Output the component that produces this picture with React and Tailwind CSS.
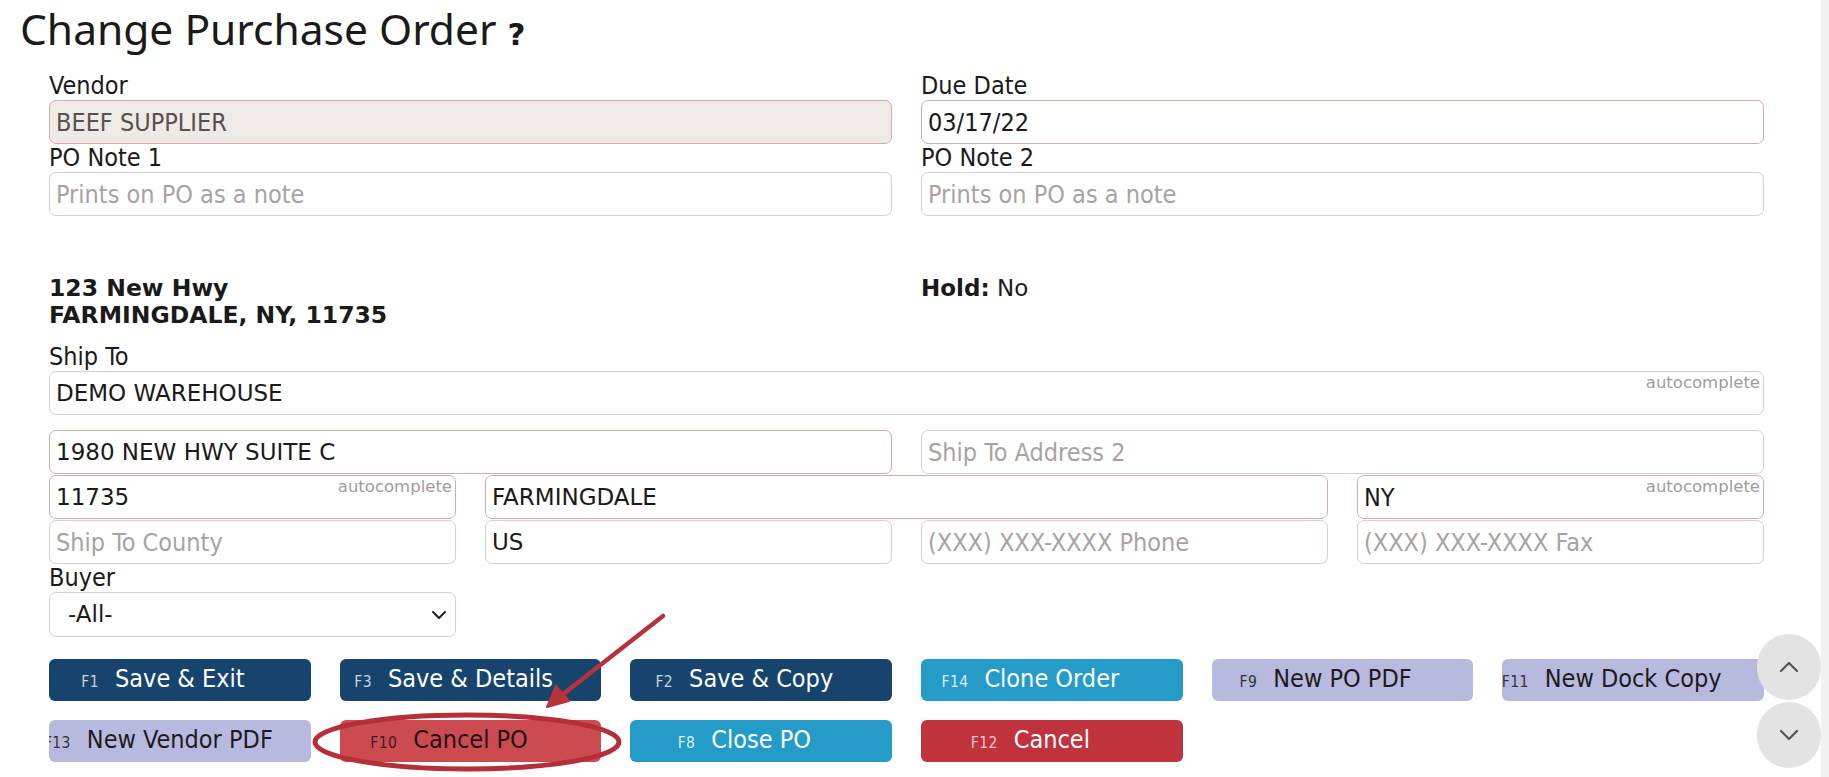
import React from 'react';

const tahoma = "font-['DejaVu_Sans_Condensed','DejaVu_Sans',sans-serif]";
const verdana = "font-['DejaVu_Sans',sans-serif]";

const Label = ({ children }) => (
  <div className={`${tahoma} text-[25px] leading-[28px] text-[#1a1a1a]`}>{children}</div>
);

const Field = ({ value, placeholder, required, disabled, auto, condensed, className = '' }) => (
  <div className={`relative ${className}`}>
    <input
      readOnly
      defaultValue={value}
      placeholder={placeholder}
      className={`h-[44px] w-full rounded-[7px] border px-[6px] outline-none ${
        condensed || !value ? `${tahoma} text-[25px]` : `${verdana} text-[23px]`
      } ${required ? 'border-[#d6acab]' : 'border-[#d6d0d0]'} ${
        disabled ? 'bg-[#eeebe6] text-[#5a5050]' : 'bg-white text-[#1a1a1a]'
      } placeholder:text-[#a9a2a2]`}
    />
    {auto && (
      <span className={`${verdana} absolute right-[4px] top-[4px] text-[16.5px] leading-none text-[#a39b9b]`}>
        autocomplete
      </span>
    )}
  </div>
);

const buttons = [
  { k: 'F1', t: 'Save & Exit', c: 'bg-[#17446c] text-white', kc: 'text-[#c9d2dc]' },
  { k: 'F3', t: 'Save & Details', c: 'bg-[#17446c] text-white', kc: 'text-[#c9d2dc]' },
  { k: 'F2', t: 'Save & Copy', c: 'bg-[#17446c] text-white', kc: 'text-[#c9d2dc]' },
  { k: 'F14', t: 'Clone Order', c: 'bg-[#259bc8] text-white', kc: 'text-[#dceef6]' },
  { k: 'F9', t: 'New PO PDF', c: 'bg-[#b8b9de] text-[#1c1c1c]', kc: 'text-[#333]' },
  { k: 'F11', t: 'New Dock Copy', c: 'bg-[#b8b9de] text-[#1c1c1c]', kc: 'text-[#333]' },
  { k: 'F13', t: 'New Vendor PDF', c: 'bg-[#b8b9de] text-[#1c1c1c]', kc: 'text-[#333]' },
  { k: 'F10', t: 'Cancel PO', c: 'bg-[#cc4b51] text-[#221414]', kc: 'text-[#3a1e1e]' },
  { k: 'F8', t: 'Close PO', c: 'bg-[#259bc8] text-white', kc: 'text-[#dceef6]' },
  { k: 'F12', t: 'Cancel', c: 'bg-[#c0323c] text-white', kc: 'text-[#e6caca]' },
];

const ActionButton = ({ k, t, c, kc }) => (
  <button
    className={`${c} ${tahoma} flex h-[42px] items-baseline justify-center overflow-hidden rounded-[6px] pt-[6px] text-[25px] leading-[28px]`}
  >
    <span className="flex w-0 justify-end whitespace-nowrap">
      <span className={`${kc} mr-[16px] text-[15.5px] tracking-wide`}>{k}</span>
    </span>
    <span className="whitespace-nowrap">{t}</span>
  </button>
);

const Chevron = ({ up }) => (
  <svg width="20" height="12" viewBox="0 0 20 12" fill="none" stroke="#555" strokeWidth="2.2" strokeLinecap="round" strokeLinejoin="round">
    {up ? <path d="M2 10 L10 2 L18 10" /> : <path d="M2 2 L10 10 L18 2" />}
  </svg>
);

export default function App() {
  return (
    <div className="relative h-[777px] w-full overflow-hidden bg-white">
      <div className="flex h-full">
        <main className="flex-1">
          <h1 className="pl-[20px] font-['Noto_Sans',sans-serif] text-[42.5px] leading-[58px] text-[#1a1a1a]">
            Change Purchase Order{' '}
            <span className={`${verdana} text-[31px] font-bold`}>?</span>
          </h1>

          <div className="ml-[49px] w-[1715px] pt-[9px]">
            <div className="grid grid-cols-4 gap-x-[29px]">
              <div className="col-span-2">
                <Label>Vendor</Label>
                <Field value="BEEF SUPPLIER" required disabled condensed />
              </div>
              <div className="col-span-2">
                <Label>Due Date</Label>
                <Field value="03/17/22" required condensed />
              </div>
              <div className="col-span-2">
                <Label>PO Note 1</Label>
                <Field placeholder="Prints on PO as a note" />
              </div>
              <div className="col-span-2">
                <Label>PO Note 2</Label>
                <Field placeholder="Prints on PO as a note" />
              </div>

              <div className={`${verdana} col-span-2 mt-[59px] text-[23.5px] font-bold leading-[27px] text-[#1a1a1a]`}>
                <div>123 New Hwy</div>
                <div>FARMINGDALE, NY, 11735</div>
              </div>
              <div className={`${verdana} col-span-2 mt-[59px] text-[23px] leading-[27px] text-[#1a1a1a]`}>
                <span className="font-bold">Hold:</span> No
              </div>

              <div className="col-span-4 mt-[14px]">
                <Label>Ship To</Label>
                <Field value="DEMO WAREHOUSE" auto />
              </div>

              <Field className="col-span-2 mt-[15px]" value="1980 NEW HWY SUITE C" required />
              <Field className="col-span-2 mt-[15px]" placeholder="Ship To Address 2" />

              <Field value="11735" required auto className="mt-px" />
              <Field className="col-span-2 mt-px" value="FARMINGDALE" required />
              <Field value="NY" required auto condensed className="mt-px" />

              <Field placeholder="Ship To County" className="mt-px" />
              <Field value="US" className="mt-px" />
              <Field placeholder="(XXX) XXX-XXXX Phone" className="mt-px" />
              <Field placeholder="(XXX) XXX-XXXX Fax" className="mt-px" />

              <div className="col-span-1">
                <Label>Buyer</Label>
                <div className="flex h-[45px] items-center justify-between rounded-[7px] border border-[#d6d0d0] bg-white pl-[18px] pr-[8px]">
                  <span className={`${verdana} text-[23px] text-[#1a1a1a]`}>-All-</span>
                  <svg width="16" height="10" viewBox="0 0 16 10" fill="none" stroke="#222" strokeWidth="2" strokeLinecap="round" strokeLinejoin="round">
                    <path d="M2 2 L8 8 L14 2" />
                  </svg>
                </div>
              </div>
            </div>

            <div className="mt-[22px] grid grid-cols-6 gap-x-[29px] gap-y-[19px]">
              {buttons.map((b) => (
                <ActionButton key={b.k} {...b} />
              ))}
            </div>
          </div>
        </main>
        <div className="w-[8px] bg-[#f1f1f1]" />
      </div>

      <div className="absolute right-[8px] top-[634px] flex flex-col gap-[2px]">
        <div className="flex h-[66px] w-[64px] items-center justify-center rounded-full bg-[#e3e3e3]">
          <Chevron up />
        </div>
        <div className="flex h-[66px] w-[64px] items-center justify-center rounded-full bg-[#e3e3e3]">
          <Chevron />
        </div>
      </div>

      <svg className="pointer-events-none absolute left-0 top-0" width="1829" height="777" viewBox="0 0 1829 777" fill="none">
        <line x1="663" y1="616" x2="562" y2="695" stroke="#b8323b" strokeWidth="4.5" strokeLinecap="round" />
        <path d="M547 707 L556 686 L569 701 Z" fill="#b8323b" stroke="#b8323b" strokeWidth="2" strokeLinejoin="round" />
        <ellipse cx="467" cy="742" rx="152" ry="27" stroke="#b52e38" strokeWidth="5" />
      </svg>
    </div>
  );
}
